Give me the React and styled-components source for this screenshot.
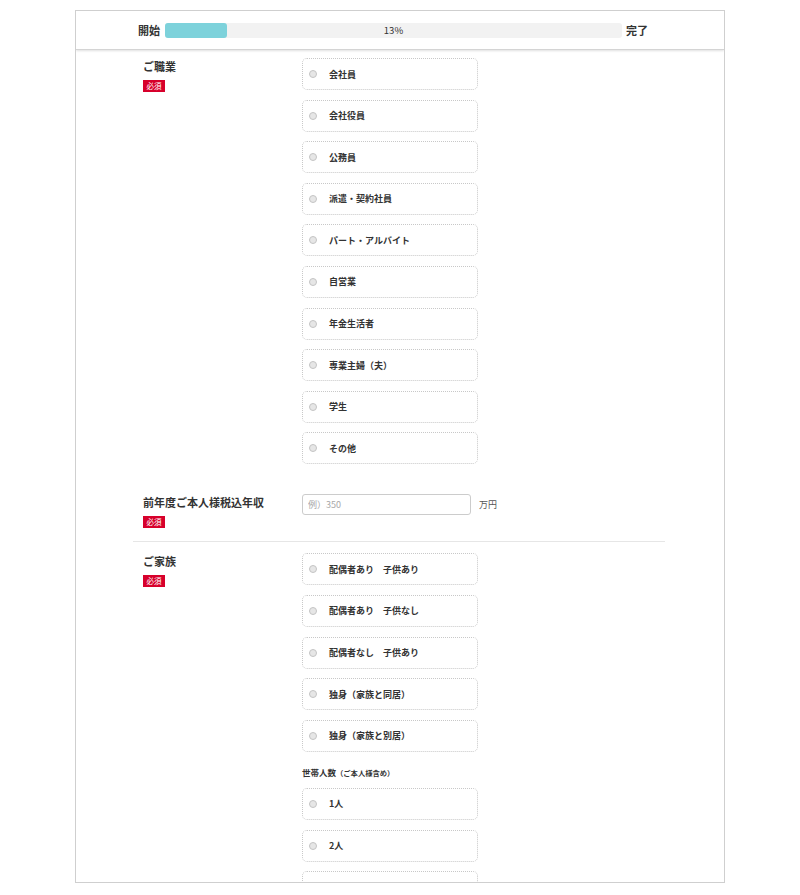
import React from 'react'
import styled, { createGlobalStyle } from 'styled-components'

const GlobalStyle = createGlobalStyle`
  body {
    margin: 0;
    background: #fff;
    font-family: "Noto Sans CJK JP", "Noto Sans", sans-serif;
    color: #333;
  }
`

let Frame = styled.div`
  margin: 10px 0 0 75px;
  width: 648px;
  height: 871px;
  border: 1px solid #cfcfcf;
  overflow: hidden;
  display: flex;
  flex-direction: column;
`

let Header = styled.div`
  flex: none;
  height: 38px;
  display: flex;
  align-items: center;
  padding-left: 62px;
  background: #fff;
  border-bottom: 1px solid #d4d4d4;
  box-shadow: 0 1px 2px rgba(0, 0, 0, 0.12);
  position: relative;
  z-index: 1;
`

let HeaderLabel = styled.span`
  font-size: 11px;
  font-weight: 700;
  color: #333;
  line-height: 1;
`

let Bar = styled.div`
  position: relative;
  width: 457px;
  height: 15px;
  margin: 0 4px 0 5px;
  background: #f2f2f2;
  border-radius: 3px;
  display: flex;
  align-items: center;
  justify-content: center;
`

let BarFill = styled.div`
  position: absolute;
  left: 0;
  top: 0;
  bottom: 0;
  background: #7dd2db;
  border-radius: 3px;
`

let BarText = styled.span`
  position: relative;
  font-size: 9.5px;
  color: #333;
`

let Content = styled.div`
  width: 532px;
  margin-left: 57px;
`

let Section = styled.div`
  display: flex;
  align-items: flex-start;
  padding: ${p => p.$pad};
  border-bottom: ${p => (p.$divider ? '1px solid #e6e6e6' : 'none')};
`

let LabelCol = styled.div`
  width: 159px;
  padding-left: 10px;
  flex: none;
  display: flex;
  flex-direction: column;
  align-items: flex-start;
  gap: 6px;
`

let Label = styled.div`
  font-size: 11px;
  font-weight: 700;
  line-height: 16px;
  color: #333;
`

let Badge = styled.span`
  display: inline-block;
  background: #d7002b;
  color: #fff;
  font-size: 7.5px;
  line-height: 12px;
  padding: 0 3.5px;
`

let FieldCol = styled.div`
  display: flex;
  flex-direction: column;
  gap: 9.6px;
`

let Option = styled.label`
  width: 176px;
  height: 32px;
  box-sizing: border-box;
  border: 1px dotted #c8c8c8;
  border-radius: 5px;
  display: flex;
  align-items: center;
  padding-left: 6px;
  font-size: 9px;
  font-weight: 700;
  color: #333;
`

let Radio = styled.span`
  width: 6px;
  height: 6px;
  border-radius: 50%;
  border: 1px solid #c4c4c4;
  background: #e6e6e6;
  margin-right: 12px;
  flex: none;
`

let SubLabel = styled.div`
  margin: 4px 0 -2px;
  font-size: 8.5px;
  font-weight: 700;
  line-height: 14px;
  color: #333;

  small {
    font-size: 7.3px;
  }
`

let InputRow = styled.div`
  display: flex;
  align-items: center;
  gap: 8px;
`

let Input = styled.input`
  width: 169px;
  height: 21px;
  box-sizing: border-box;
  border: 1px solid #cccccc;
  border-radius: 3px;
  padding: 0 5px;
  font-family: inherit;
  font-size: 9px;
  color: #333;
  outline: none;

  &::placeholder {
    color: #a8a8a8;
  }
`

let Unit = styled.span`
  font-size: 9px;
  color: #555;
`

const jobs = [
  '会社員', '会社役員', '公務員', '派遣・契約社員', 'パート・アルバイト',
  '自営業', '年金生活者', '専業主婦（夫）', '学生', 'その他',
]

const families = [
  '配偶者あり　子供あり', '配偶者あり　子供なし', '配偶者なし　子供あり',
  '独身（家族と同居）', '独身（家族と別居）',
]

const members = ['1人', '2人', '3人']

function Choice({ text }) {
  return (
    <Option>
      <Radio />
      {text}
    </Option>
  )
}

export default function App() {
  const progress = 13

  return (
    <>
      <GlobalStyle />
      <Frame>
        <Header>
          <HeaderLabel>開始</HeaderLabel>
          <Bar>
            <BarFill style={{ width: `${(progress / 100) * 457 + 3}px` }} />
            <BarText>{progress}%</BarText>
          </Bar>
          <HeaderLabel>完了</HeaderLabel>
        </Header>
        <Content>
          <Section $pad="8px 0 15px">
            <LabelCol>
              <Label>ご職業</Label>
              <Badge>必須</Badge>
            </LabelCol>
            <FieldCol>
              {jobs.map(j => <Choice key={j} text={j} />)}
            </FieldCol>
          </Section>
          <Section $pad="15px 0 13px" $divider>
            <LabelCol>
              <Label>前年度ご本人様税込年収</Label>
              <Badge>必須</Badge>
            </LabelCol>
            <InputRow>
              <Input placeholder="例）350" />
              <Unit>万円</Unit>
            </InputRow>
          </Section>
          <Section $pad="11px 0 20px">
            <LabelCol>
              <Label>ご家族</Label>
              <Badge>必須</Badge>
            </LabelCol>
            <FieldCol>
              {families.map(f => <Choice key={f} text={f} />)}
              <SubLabel>世帯人数<small>（ご本人様含め）</small></SubLabel>
              {members.map(m => <Choice key={m} text={m} />)}
            </FieldCol>
          </Section>
        </Content>
      </Frame>
    </>
  )
}
